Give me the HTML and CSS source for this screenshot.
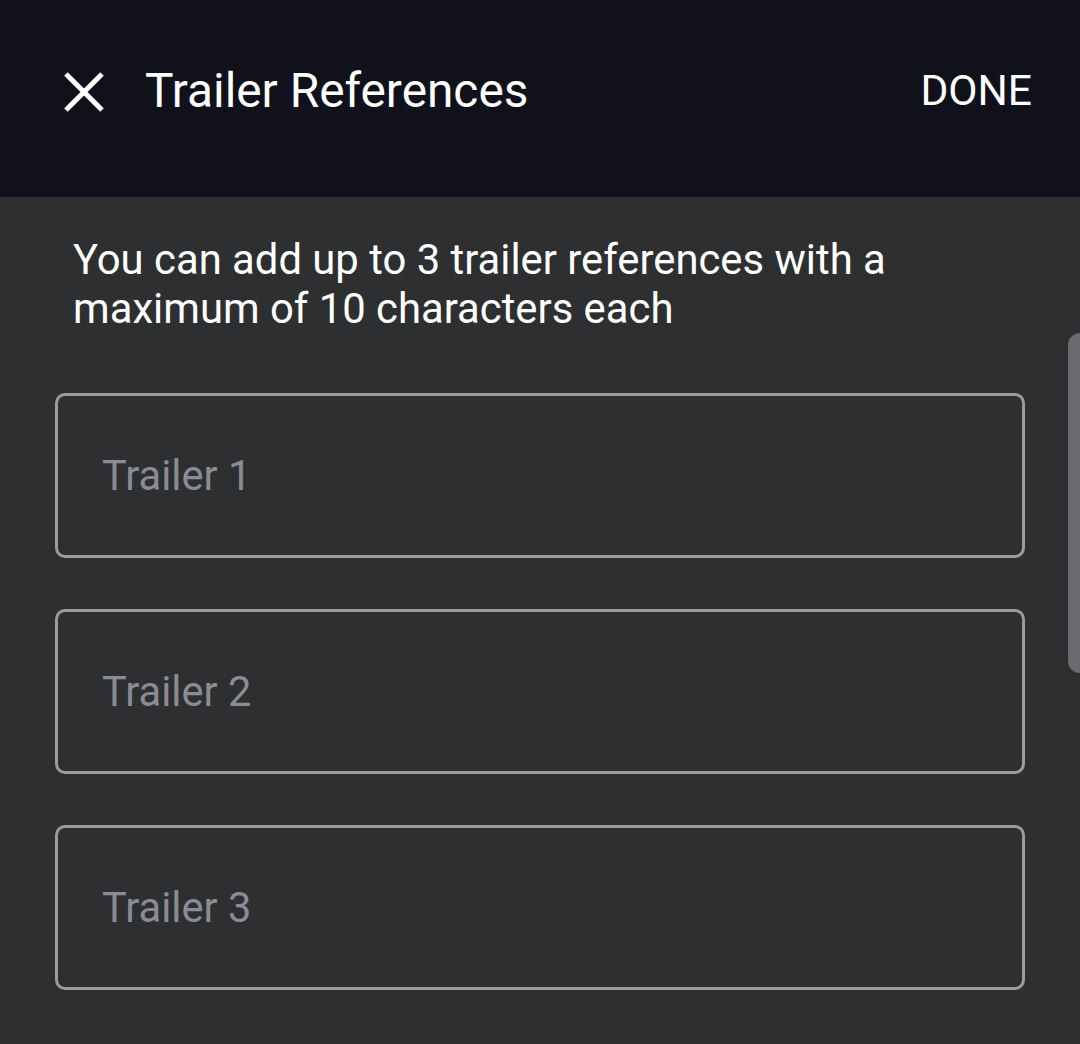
FILE: index.html
```html
<!DOCTYPE html>
<html>
<head>
<meta charset="utf-8">
<link rel="stylesheet" href="styles.css">
</head>
<body>
<div class="app">
  <header class="topbar">
    <button class="close" aria-label="Close">
      <svg viewBox="0 0 42 42" width="42" height="42"><path d="M3 3 L39 39 M39 3 L3 39" stroke="#ffffff" stroke-width="5" stroke-linecap="butt"/></svg>
    </button>
    <h1 class="title">Trailer References</h1>
    <span class="done">DONE</span>
  </header>
  <main class="content">
    <p class="intro">You can add up to 3 trailer references with a maximum of 10 characters each</p>
    <div class="fields">
      <div class="field"><span class="placeholder">Trailer 1</span></div>
      <div class="field"><span class="placeholder">Trailer 2</span></div>
      <div class="field"><span class="placeholder">Trailer 3</span></div>
    </div>
    <div class="scrollbar"></div>
  </main>
</div>
</body>
</html>
```
FILE: styles.css
```css
* { box-sizing: border-box; }
html, body { margin: 0; padding: 0; }
body {
  width: 1080px;
  height: 1044px;
  overflow: hidden;
  background: #2e2f31;
  font-family: Roboto, "Liberation Sans", sans-serif;
}
.app { display: flex; flex-direction: column; height: 1044px; }
.topbar {
  height: 197px;
  background: #10111a;
  display: flex;
  align-items: center;
  padding: 0 48px 0 63px;
  flex-shrink: 0;
}
.close {
  background: none;
  border: none;
  padding: 0;
  width: 42px;
  height: 42px;
  display: flex;
  margin-top: -14px;
}
.close svg { display: block; }
.title {
  margin: 0 0 0 40px;
  font-weight: 400;
  font-size: 47.8px;
  color: #ffffff;
  flex: 1;
  margin-top: -16px;
}
.done {
  color: #ffffff;
  font-size: 42.5px;
  margin-top: -16px;
}
.content {
  position: relative;
  flex: 1;
  padding: 0 55px;
}
.intro {
  margin: 38px 0 0 18px;
  font-size: 41.8px;
  line-height: 49px;
  color: #ffffff;
  max-width: 840px;
}
.fields {
  margin-top: 60px;
  display: flex;
  flex-direction: column;
  gap: 51px;
}
.field {
  height: 165px;
  border: 3px solid #9c9c9e;
  border-radius: 10px;
  display: flex;
  align-items: center;
  padding-left: 44px;
}
.placeholder {
  color: #8b8c93;
  font-size: 41.6px;
}
.scrollbar {
  position: absolute;
  right: -12px;
  top: 136px;
  width: 24px;
  height: 340px;
  background: #6a6b6e;
  border-radius: 12px;
}
```
